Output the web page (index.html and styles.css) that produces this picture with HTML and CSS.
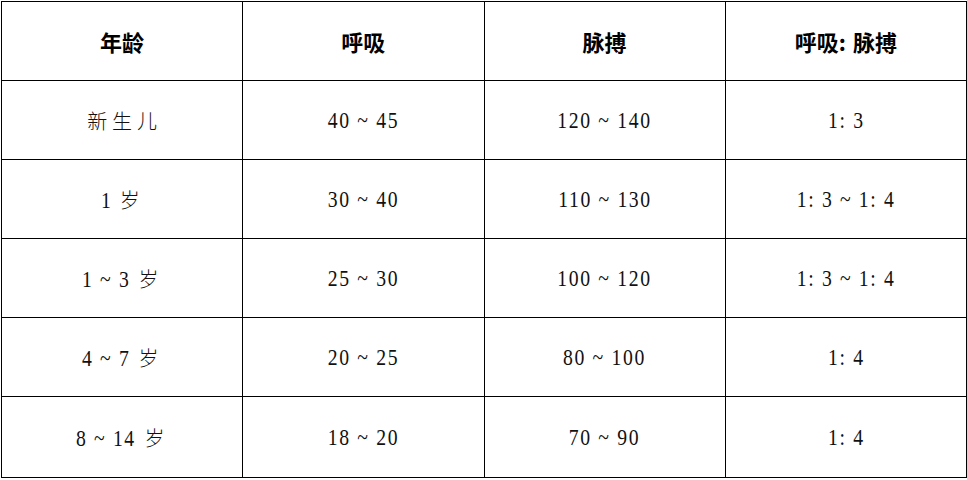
FILE: index.html
```html
<!DOCTYPE html>
<html lang="zh">
<head>
<meta charset="utf-8">
<title>呼吸与脉搏</title>
<link rel="stylesheet" href="styles.css">
</head>
<body>
<table class="vitals">
  <thead>
    <tr>
      <th>年龄</th>
      <th>呼吸</th>
      <th>脉搏</th>
      <th>呼吸<span class="colon">:</span>脉搏</th>
    </tr>
  </thead>
  <tbody>
    <tr><td><span class="cjk">新生儿</span></td><td><span class="num">40 ~ 45</span></td><td><span class="num">120 ~ 140</span></td><td><span class="num">1: 3</span></td></tr>
    <tr><td><span class="num age w1">1</span><span class="cjk">岁</span></td><td><span class="num">30 ~ 40</span></td><td><span class="num">110 ~ 130</span></td><td><span class="num">1: 3 ~ 1: 4</span></td></tr>
    <tr><td><span class="num age w3">1 ~ 3</span><span class="cjk">岁</span></td><td><span class="num">25 ~ 30</span></td><td><span class="num">100 ~ 120</span></td><td><span class="num">1: 3 ~ 1: 4</span></td></tr>
    <tr><td><span class="num age w3">4 ~ 7</span><span class="cjk">岁</span></td><td><span class="num">20 ~ 25</span></td><td><span class="num">80 ~ 100</span></td><td><span class="num">1: 4</span></td></tr>
    <tr class="last"><td><span class="num age w4">8 ~ 14</span><span class="cjk">岁</span></td><td><span class="num">18 ~ 20</span></td><td><span class="num">70 ~ 90</span></td><td><span class="num">1: 4</span></td></tr>
  </tbody>
</table>
</body>
</html>
```
FILE: styles.css
```css
html, body {
  margin: 0;
  padding: 0;
  background: #fff;
}
body {
  padding: 1px 0 0 1px;
}
.vitals {
  border-collapse: collapse;
  width: 966px;
  table-layout: fixed;
  color: #111;
}
.vitals th,
.vitals td {
  border: 1.5px solid #000;
  text-align: center;
  vertical-align: middle;
  height: 78px;
  padding: 0;
}
.vitals th {
  font-family: "Noto Sans CJK SC", sans-serif;
  font-weight: 700;
  font-size: 22px;
  color: #000;
}
.vitals th .colon {
  margin-right: 7px;
}
.vitals td {
  font-family: "Liberation Serif", "Noto Sans CJK SC", serif;
  font-size: 24px;
}
.vitals .num {
  display: inline-block;
  letter-spacing: 2px;
  transform: scaleX(0.82);
}
.vitals .num.age {
  transform-origin: left center;
}
.vitals .num.age.w1 { margin-right: 5px; }
.vitals .num.age.w3 { margin-right: -2px; }
.vitals .num.age.w4 { margin-right: -4px; }
.vitals .cjk {
  font-family: "Noto Sans CJK SC", sans-serif;
  font-weight: 300;
  font-size: 20px;
  letter-spacing: 4px;
}
.vitals td > .cjk:only-child {
  letter-spacing: 5px;
  padding-left: 5px;
}
.vitals tr.last td {
  height: 80px;
}
```
